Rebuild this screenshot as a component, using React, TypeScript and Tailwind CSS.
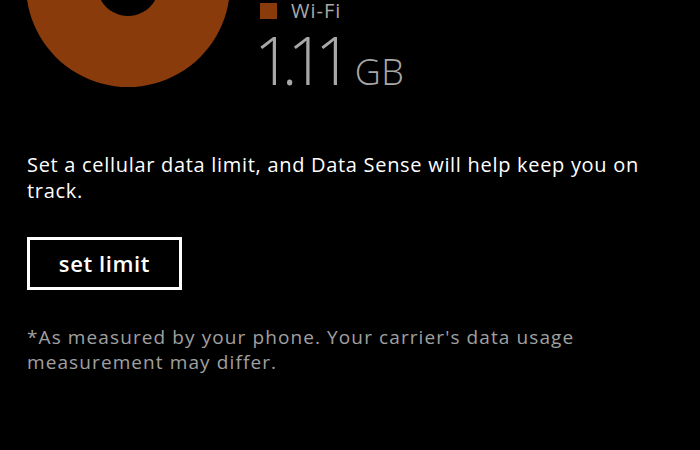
import React from "react";

export default function App() {
  return (
    <div
      className="w-[700px] h-[450px] bg-black overflow-hidden text-white"
      style={{ fontFamily: '"Open Sans", "Noto Sans", sans-serif' }}
    >
      <div className="flex items-start">
        <svg width="250" height="90" viewBox="0 0 250 90" className="shrink-0">
          <path
            fillRule="evenodd"
            fill="#8a3b0b"
            d="M128,-117 a102,102 0 1,0 0.01,0 Z M128,-46 a31,31 0 1,1 -0.01,0 Z"
          />
        </svg>
        <div className="ml-[10px] flex flex-col">
          <div className="flex items-center h-[22px]">
            <div className="w-[17px] h-[16px] bg-[#8a3b0b] mt-[-1px]" />
            <span className="ml-[14px] text-[20px] leading-[22px] text-[#a8a8a8] tracking-[1px]">Wi-Fi</span>
          </div>
          <div className="flex items-baseline mt-[7px] text-[#a8a8a8]">
            <span className="text-[66px] leading-[60px] font-light tracking-[-10px] ml-[-6px]">1.11</span>
            <span className="ml-[12px] text-[36px] leading-[40px] font-light tracking-[0.5px]">GB</span>
          </div>
        </div>
      </div>
      <div className="pl-[27px] pr-[40px] mt-[60px]">
        <p className="text-[20px] leading-[26px] text-white tracking-[0.7px]">
          Set a cellular data limit, and Data Sense will help keep you on track.
        </p>
        <button className="mt-[33px] w-[155px] h-[53px] border-[3px] border-white text-[22px] font-semibold text-white tracking-[0.6px] flex items-center justify-center">
          set limit
        </button>
        <p className="mt-[35px] text-[19px] leading-[25px] text-[#a0a0a0] tracking-[1.1px]">
          *As measured by your phone. Your carrier's data usage measurement may differ.
        </p>
      </div>
    </div>
  );
}
